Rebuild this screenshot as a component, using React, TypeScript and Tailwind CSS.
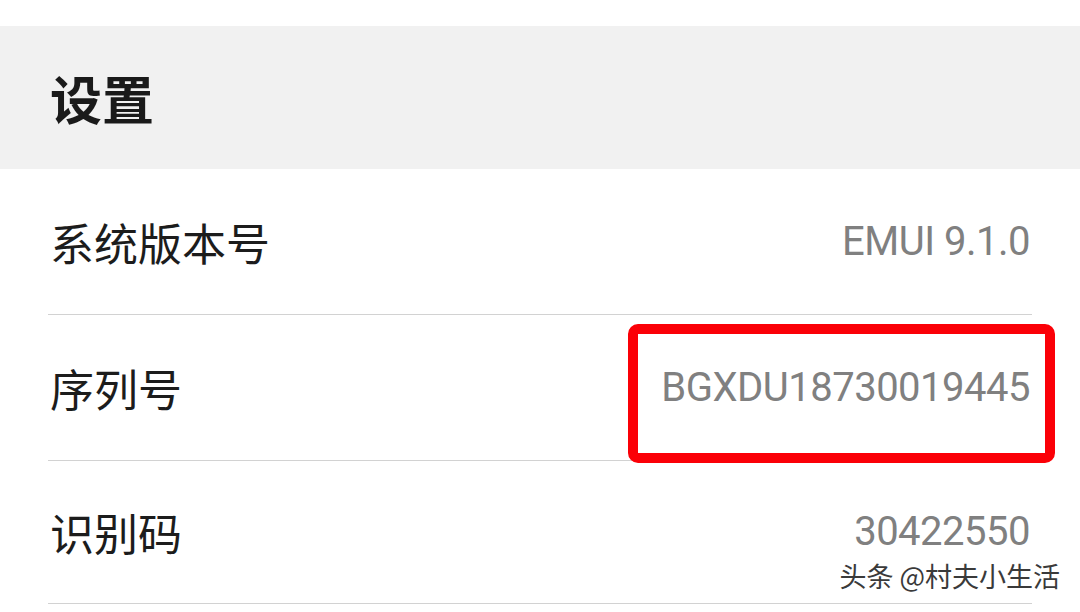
import React from 'react';

interface InfoRow {
  label: string;
  value: string;
  height: string;
}

const rows: InfoRow[] = [
  { label: '系统版本号', value: 'EMUI 9.1.0', height: 'h-[146px]' },
  { label: '序列号', value: 'BGXDU18730019445', height: 'h-[146px]' },
  { label: '识别码', value: '30422550', height: 'h-[143px]' },
];

const App: React.FC = () => {
  return (
    <div className="relative w-[1080px] h-[612px] overflow-hidden bg-white">
      {/* Top strip */}
      <div className="h-[26px] bg-white" />

      {/* Header */}
      <div className="h-[143px] bg-[#f1f1f1] flex items-center px-[50px]">
        <h1 className="text-[52px] leading-none font-bold text-[#1a1a1a] font-['Noto_Sans_CJK_SC',sans-serif]">
          设置
        </h1>
      </div>

      {/* Rows */}
      <div className="pl-[48px] pr-[48px]">
        {rows.map((row) => (
          <div
            key={row.label}
            className={`${row.height} flex items-center justify-between border-b border-[#d2d2d2]`}
          >
            <span className="pl-[2px] text-[44px] leading-none text-[#1c1c1c] font-['Noto_Sans_CJK_SC',sans-serif]">
              {row.label}
            </span>
            <span className="pr-[2px] text-[40px] leading-none tracking-[-0.5px] text-[#808080] font-['Roboto',sans-serif]">
              {row.value}
            </span>
          </div>
        ))}
      </div>

      {/* Red highlight annotation */}
      <div className="absolute left-[628px] top-[324px] w-[427px] h-[139px] border-[10px] border-[#fb0007] rounded-[10px]" />

      {/* Watermark */}
      <div className="absolute right-[20px] top-[562px] text-[27px] leading-none text-[#3a3a3a] font-['Noto_Sans_CJK_SC',sans-serif] [text-shadow:1px_1px_0_#ffffff,-1px_-1px_0_#ffffff]">
        头条 @村夫小生活
      </div>
    </div>
  );
};

export default App;
